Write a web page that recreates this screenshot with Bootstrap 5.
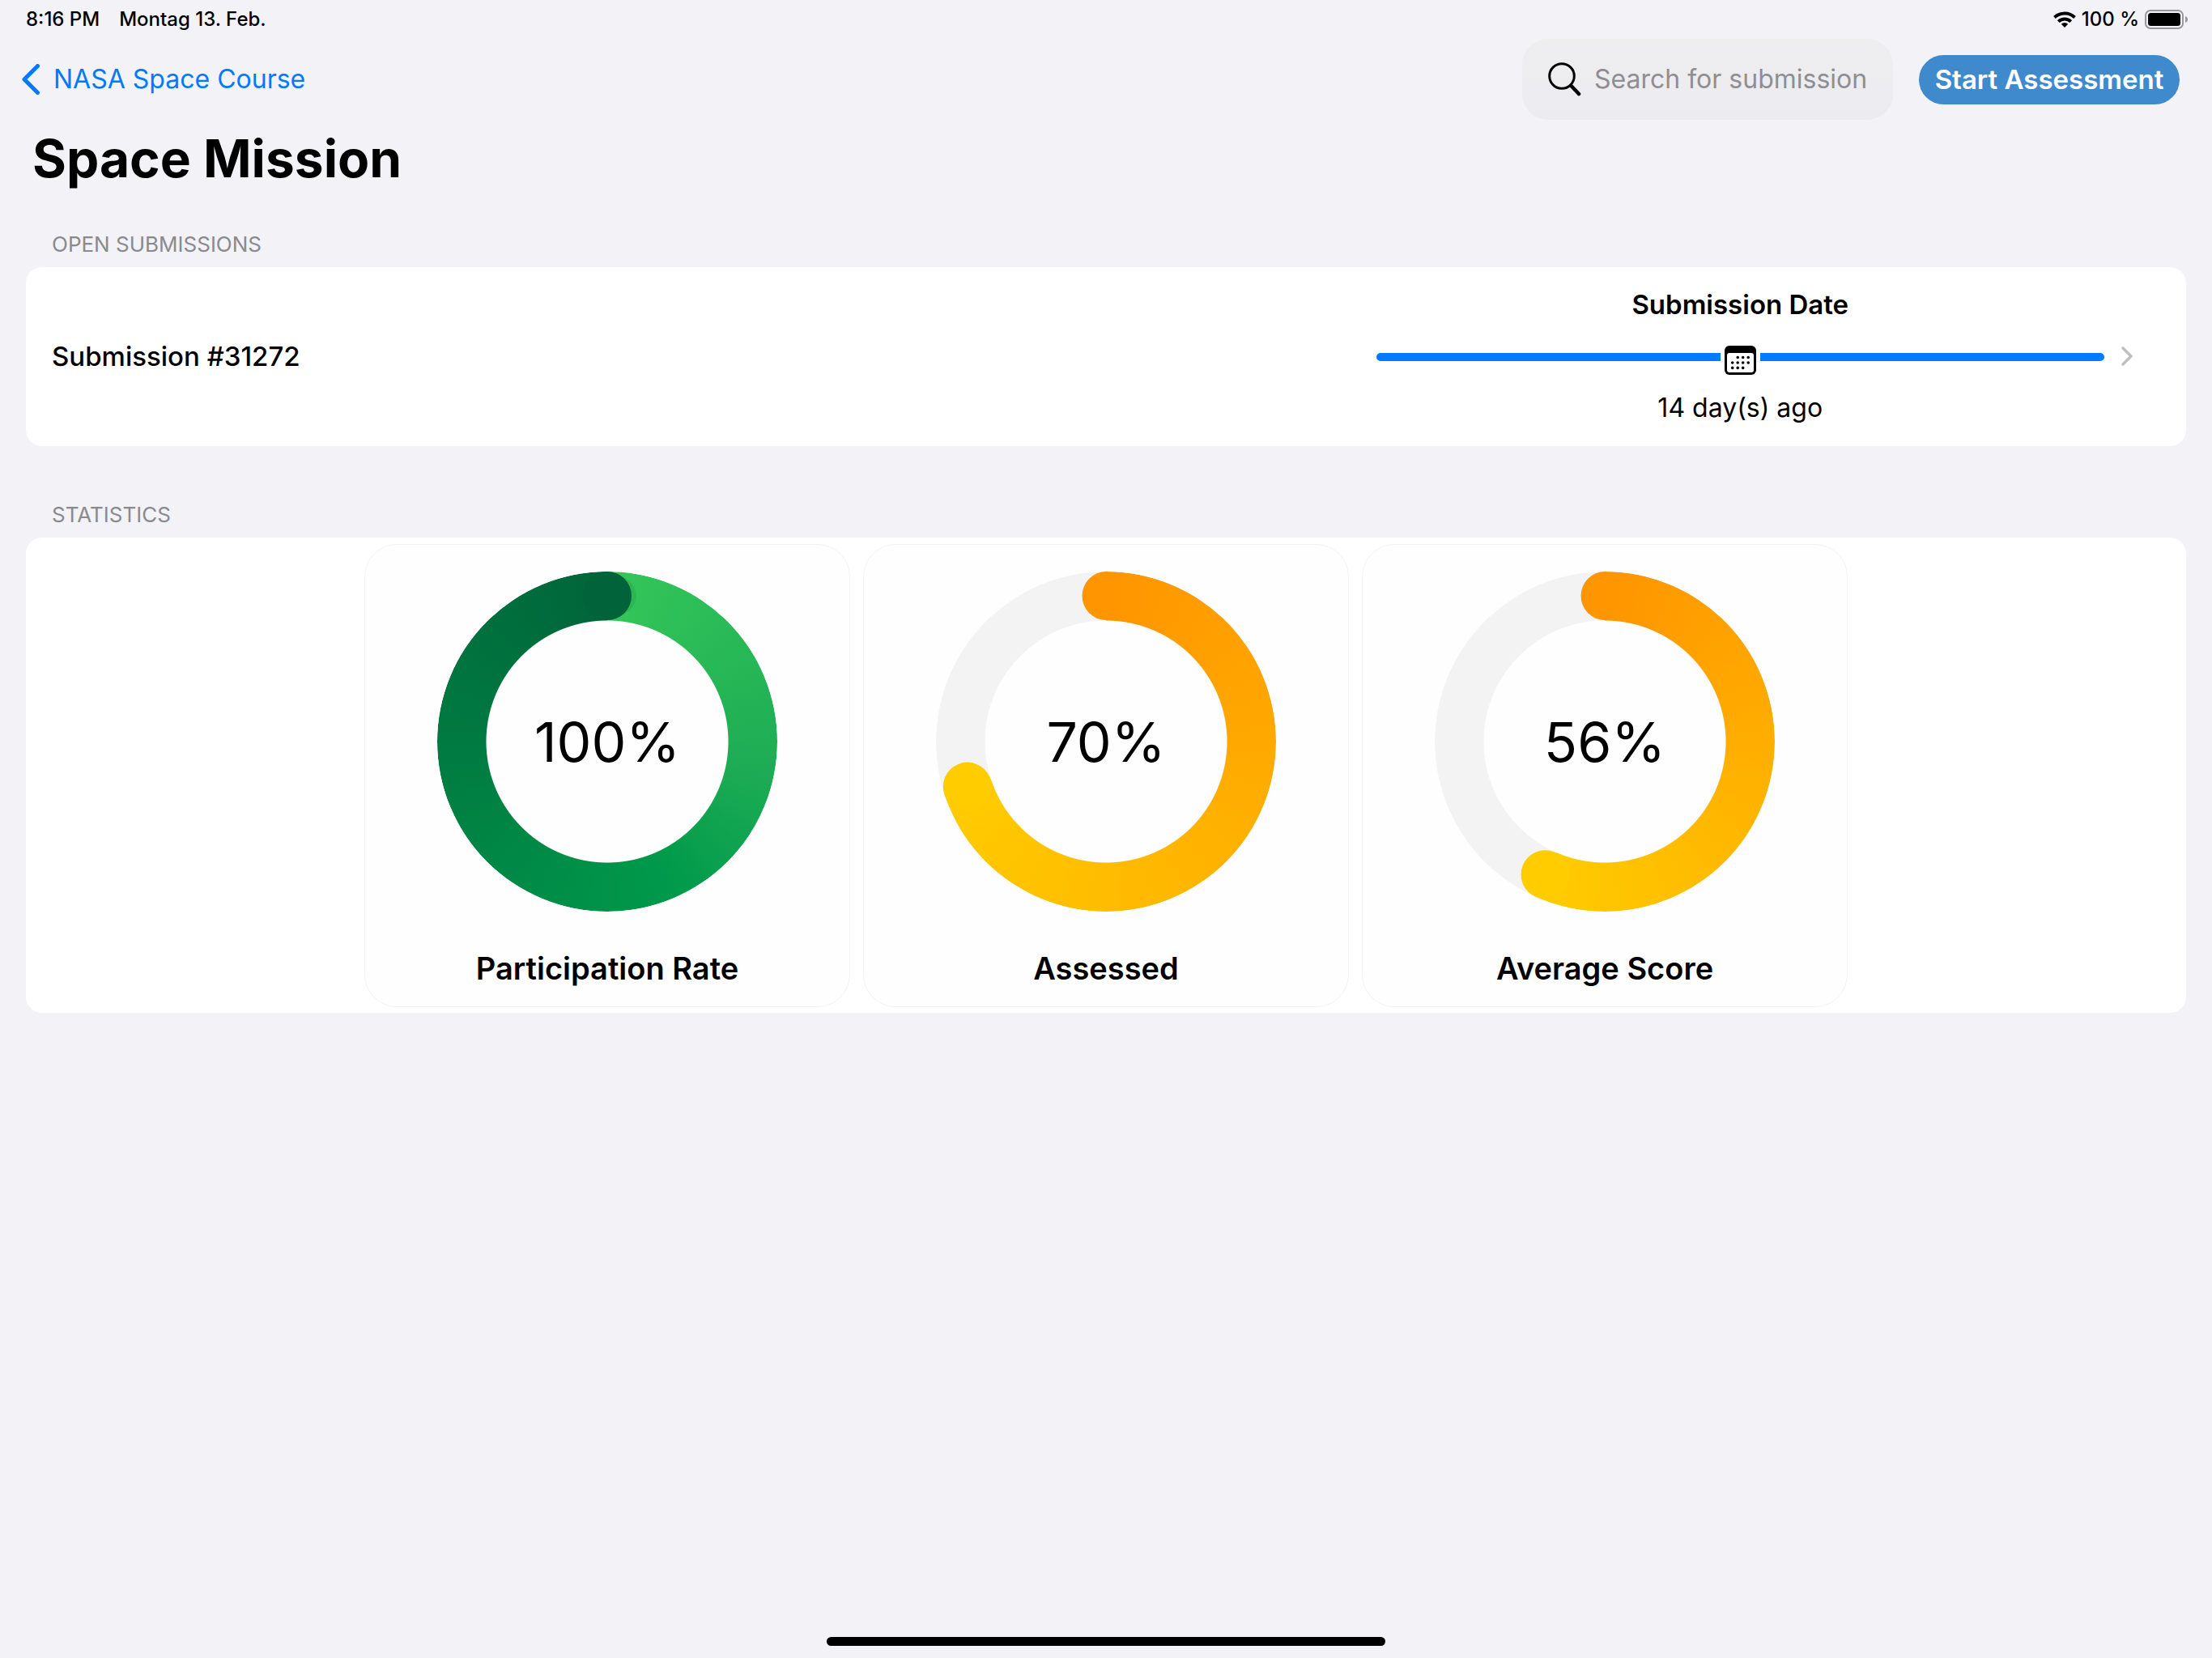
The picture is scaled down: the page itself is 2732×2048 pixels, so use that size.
<!DOCTYPE html>
<html lang="en">
<head>
<meta charset="utf-8">
<meta name="viewport" content="width=device-width, initial-scale=1">
<title>Space Mission</title>
<link href="https://cdn.jsdelivr.net/npm/bootstrap@5.3.0/dist/css/bootstrap.min.css" rel="stylesheet">
<style>
  body { background: #f2f2f7; color: #000; font-family: Inter, "Liberation Sans", sans-serif; font-size: 32px; line-height: 44px; }
  svg { display: block; flex: none; }
  .status-bar { font-size: 24px; line-height: 48px; font-weight: 500; padding: 0 30px 0 32px; }
  .status-right { gap: 7px; }
  .top-nav { padding: 0 40px 0 27px; }
  .nav-tools { gap: 32px; }
  .back-link { color: #007aff; gap: 17px; }
  .search-box { width: 458px; height: 100px; padding: 0 32px; gap: 16px; border-radius: 32px; background: linear-gradient(#eeeeef, #ecebf0); }
  .search-box input { font-size: 32px; line-height: 44px; color: #000; }
  .search-box input::placeholder { color: #8e8e93; opacity: 1; }
  .btn-assess { --bs-btn-color: #fff; --bs-btn-bg: #3f8acd; --bs-btn-hover-color: #fff; --bs-btn-hover-bg: #3579b8; width: 322px; height: 61px; padding: 0; font-size: 33px; line-height: 44px; font-weight: 600; }
  .page-title { font-size: 64px; line-height: 80px; font-weight: 700; margin: 8px 0 50px; }
  .section-label { font-size: 26px; line-height: 32px; font-weight: 400; color: #8a8a8e; margin: 0 0 12px 32px; }
  .panel { background: #fff; border-radius: 20px; }
  .submission { color: #000; font-size: 33px; padding: 24px 66px 25px 32px; }
  .submission-name { font-weight: 500; }
  .timeline { width: 35%; margin-right: 21px; }
  .timeline-row { margin: 29px 0 19px; gap: 5px; }
  .timeline-bar { height: 10px; margin-top: 9px; background: #007aff; }
  .bar-left { border-radius: 5px 0 0 5px; }
  .bar-right { border-radius: 0 5px 5px 0; }
  .timeline-age { font-size: 32px; }
  .statistics { margin-top: 69px; }
  .stat-row { padding: 8px 0 7px; gap: 16px; }
  .stat-card { width: 600px; padding: 33px 0 21px; border: 1px solid #f3f3f3; border-radius: 40px; background: #fefefe; gap: 44px; }
  .ring { width: 420px; height: 420px; }
  .ring-fill { border-radius: 50%; -webkit-mask: radial-gradient(circle closest-side, transparent 149px, #000 150px); mask: radial-gradient(circle closest-side, transparent 149px, #000 150px);
    background: conic-gradient(#ff9500, #ffcc00 var(--value), #f3f3f3 var(--value)); }
  .ring-full { background: conic-gradient(#34c759, #1cab54 29%, #009a4b 43%, #007840 77%, #00653a); }
  .ring-value { font-size: 68px; line-height: 80px; }
  .stat-name { font-size: 38px; line-height: 52px; font-weight: 600; margin: 0; }
  .home-bar { width: 690px; height: 11px; border-radius: 6px; background: #000; margin-bottom: 15px; }
</style>
<script src="https://cdn.jsdelivr.net/npm/bootstrap@5.3.0/dist/js/bootstrap.bundle.min.js"></script>
</head>
<body class="d-flex flex-column min-vh-100">
<div class="status-bar d-flex justify-content-between">
  <div class="d-flex gap-4"><span>8:16 PM</span><span>Montag 13. Feb.</span></div>
  <div class="status-right d-flex align-items-center">
    <svg width="28" height="20" viewBox="0 0 28 20" fill="none" stroke="#000" stroke-width="4" aria-hidden="true">
      <path d="M1.5 7.5a18 18 0 0 1 25 0"/><path d="M6.3 12.6a11 11 0 0 1 15.4 0"/><path d="M14 20l-4.2-4.3a6 6 0 0 1 8.4 0z" fill="#000" stroke="none"/>
    </svg>
    <span>100 %</span>
    <svg width="53" height="24" viewBox="0 0 53 24" aria-hidden="true">
      <rect x="1" y="1" width="46" height="22" rx="6" fill="none" stroke="#98989c" stroke-width="2"/>
      <rect x="4" y="4" width="40" height="16" rx="3.5"/><path d="M50 8q3 1.2 3 4t-3 4z" fill="#98989c"/>
    </svg>
  </div>
</div>

<nav class="top-nav d-flex align-items-center justify-content-between">
  <a href="#" class="back-link d-flex align-items-center text-decoration-none">
    <svg width="22" height="38" viewBox="0 0 22 38" fill="none" stroke="#007aff" stroke-width="5" stroke-linecap="round" stroke-linejoin="round" aria-hidden="true"><path d="M19.5 2.5L3 19l16.5 16.5"/></svg>
    <span>NASA Space Course</span>
  </a>
  <div class="nav-tools d-flex align-items-center">
    <label class="search-box d-flex align-items-center">
      <svg width="41" height="42" viewBox="0 0 41 42" fill="none" stroke="#000" stroke-width="3" stroke-linecap="round" aria-hidden="true"><circle cx="17" cy="17" r="15.3"/><path d="M28.5 29L38 39" stroke-width="4.5"/></svg>
      <input type="text" class="form-control border-0 bg-transparent shadow-none p-0" placeholder="Search for submission" aria-label="Search for submission">
    </label>
    <button type="button" class="btn btn-assess rounded-pill border-0">Start Assessment</button>
  </div>
</nav>

<main class="px-4 mx-2">
  <h1 class="page-title ms-2">Space Mission</h1>

  <section>
    <h2 class="section-label">OPEN SUBMISSIONS</h2>
    <div class="panel">
      <a href="#" class="submission d-flex align-items-center text-decoration-none">
        <span class="submission-name me-auto">Submission #31272</span>
        <div class="timeline text-center">
          <div class="fw-semibold">Submission Date</div>
          <div class="timeline-row d-flex align-items-start">
            <div class="timeline-bar bar-left flex-fill"></div>
            <svg width="39" height="36" viewBox="0 0 39 36" aria-hidden="true">
              <rect width="39" height="36" rx="6"/><rect x="3" y="9" width="33" height="24" rx="3" fill="#fff"/>
              <path d="M16.2 14.5h.01M22.7 14.5h.01M29.2 14.5h.01M9.7 21h.01M16.2 21h.01M22.7 21h.01M29.2 21h.01M9.7 27.4h.01M16.2 27.4h.01M22.7 27.4h.01" stroke="#000" stroke-width="3.6" stroke-linecap="round"/>
            </svg>
            <div class="timeline-bar bar-right flex-fill"></div>
          </div>
          <div class="timeline-age">14 day(s) ago</div>
        </div>
        <svg width="14" height="24" viewBox="0 0 14 24" fill="none" stroke="#c0c0c2" stroke-width="3.5" stroke-linecap="round" stroke-linejoin="round" aria-hidden="true"><path d="M2 2l10 10L2 22"/></svg>
      </a>
    </div>
  </section>

  <section class="statistics">
    <h2 class="section-label">STATISTICS</h2>
    <div class="panel stat-row d-flex justify-content-center">
      <article class="stat-card d-flex flex-column align-items-center">
        <div class="ring position-relative d-flex align-items-center justify-content-center">
          <div class="ring-fill ring-full position-absolute w-100 h-100"></div>
          <svg class="position-absolute" width="420" height="420" viewBox="0 0 420 420" aria-hidden="true">
            <path d="M210 1c15 0 36 12 36 29s-21 29-36 29z" fill="#2fb554"/>
            <circle cx="210" cy="30" r="30" fill="#006339"/>
          </svg>
          <span class="ring-value position-relative">100%</span>
        </div>
        <h3 class="stat-name">Participation Rate</h3>
      </article>
      <article class="stat-card d-flex flex-column align-items-center">
        <div class="ring position-relative d-flex align-items-center justify-content-center">
          <div class="ring-fill position-absolute w-100 h-100" style="--value:70%"></div>
          <svg class="position-absolute" width="420" height="420" viewBox="0 0 420 420" aria-hidden="true">
            <path d="M210.5 0a30 30 0 0 0 0 60z" fill="#ff9500"/><circle cx="38.8" cy="265.6" r="30" fill="#ffcc00"/>
          </svg>
          <span class="ring-value position-relative">70%</span>
        </div>
        <h3 class="stat-name">Assessed</h3>
      </article>
      <article class="stat-card d-flex flex-column align-items-center">
        <div class="ring position-relative d-flex align-items-center justify-content-center">
          <div class="ring-fill position-absolute w-100 h-100" style="--value:56.6%"></div>
          <svg class="position-absolute" width="420" height="420" viewBox="0 0 420 420" aria-hidden="true">
            <path d="M210.5 0a30 30 0 0 0 0 60z" fill="#ff9500"/><circle cx="136.5" cy="374.2" r="30" fill="#ffcc00"/>
          </svg>
          <span class="ring-value position-relative">56%</span>
        </div>
        <h3 class="stat-name">Average Score</h3>
      </article>
    </div>
  </section>
</main>
<div class="home-bar mt-auto mx-auto"></div>
</body>
</html>
